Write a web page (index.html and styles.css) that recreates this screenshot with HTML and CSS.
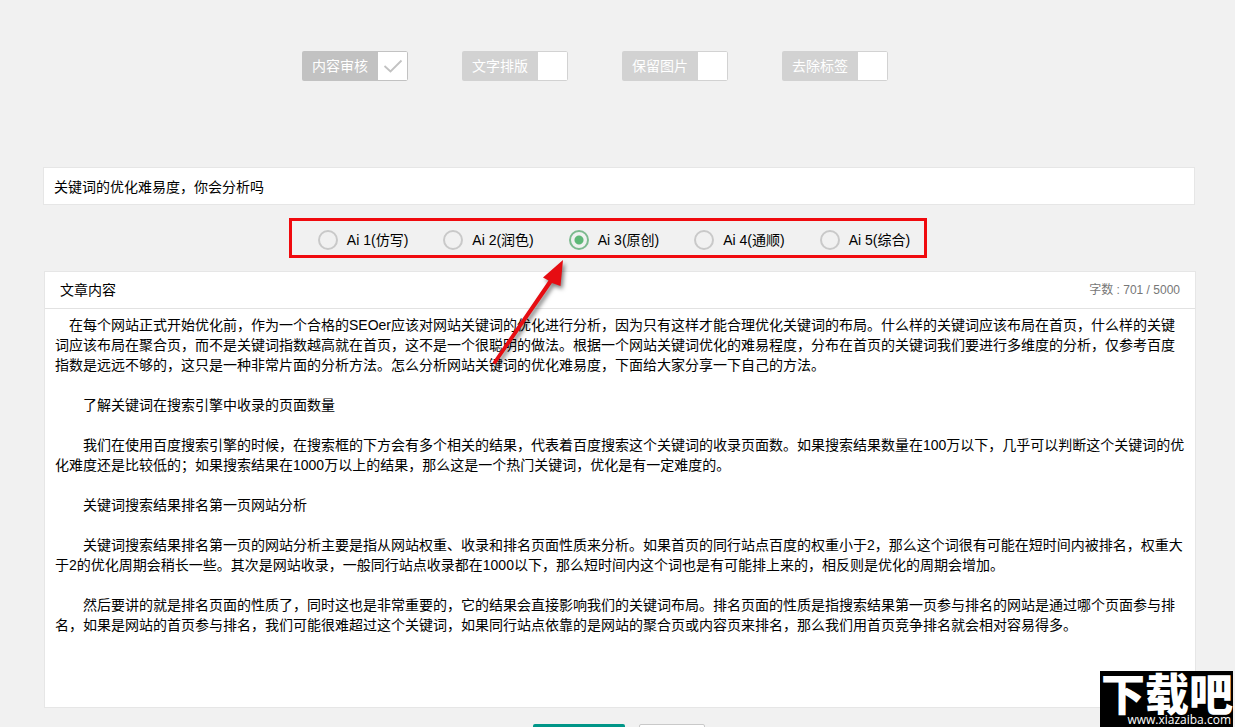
FILE: index.html
```html
<!DOCTYPE html>
<html lang="zh-CN">
<head>
<meta charset="utf-8">
<title>文章内容</title>
<link rel="stylesheet" href="styles.css">
</head>
<body>
<form class="page">
  <div class="options">
    <label class="toggle"><input type="checkbox" checked><span class="toggle-text">内容审核</span><span class="toggle-box"><svg class="tick" viewBox="0 0 20 16"><path d="M1.500 8 7.500 13.500 18.500 2.500" fill="none" stroke="currentColor" stroke-width="1.8"/></svg></span></label>
    <label class="toggle"><input type="checkbox"><span class="toggle-text">文字排版</span><span class="toggle-box"></span></label>
    <label class="toggle"><input type="checkbox"><span class="toggle-text">保留图片</span><span class="toggle-box"></span></label>
    <label class="toggle"><input type="checkbox"><span class="toggle-text">去除标签</span><span class="toggle-box"></span></label>
  </div>

  <input class="title" type="text" aria-label="标题" value="关键词的优化难易度，你会分析吗">

  <div class="modes">
    <label class="mode"><input type="radio" name="mode">Ai 1(仿写)</label>
    <label class="mode"><input type="radio" name="mode">Ai 2(润色)</label>
    <label class="mode"><input type="radio" name="mode" checked>Ai 3(原创)</label>
    <label class="mode"><input type="radio" name="mode">Ai 4(通顺)</label>
    <label class="mode"><input type="radio" name="mode">Ai 5(综合)</label>
    <svg class="arrow" viewBox="0 0 90 120" aria-hidden="true">
      <path d="M7.500 106.500 63.500 24.500 58 21.500 78 4 75.500 30 67 27 10.500 108.500Z" fill="#e60d12"/>
    </svg>
  </div>

  <section class="panel">
    <header class="panel-head">
      <label for="content">文章内容</label>
      <span class="count">字数 : 701 / 5000</span>
    </header>
    <textarea class="content" id="content" spellcheck="false">　在每个网站正式开始优化前，作为一个合格的SEOer应该对网站关键词的优化进行分析，因为只有这样才能合理优化关键词的布局。什么样的关键词应该布局在首页，什么样的关键词应该布局在聚合页，而不是关键词指数越高就在首页，这不是一个很聪明的做法。根据一个网站关键词优化的难易程度，分布在首页的关键词我们要进行多维度的分析，仅参考百度指数是远远不够的，这只是一种非常片面的分析方法。怎么分析网站关键词的优化难易度，下面给大家分享一下自己的方法。

　　了解关键词在搜索引擎中收录的页面数量

　　我们在使用百度搜索引擎的时候，在搜索框的下方会有多个相关的结果，代表着百度搜索这个关键词的收录页面数。如果搜索结果数量在100万以下，几乎可以判断这个关键词的优化难度还是比较低的；如果搜索结果在1000万以上的结果，那么这是一个热门关键词，优化是有一定难度的。

　　关键词搜索结果排名第一页网站分析

　　关键词搜索结果排名第一页的网站分析主要是指从网站权重、收录和排名页面性质来分析。如果首页的同行站点百度的权重小于2，那么这个词很有可能在短时间内被排名，权重大于2的优化周期会稍长一些。其次是网站收录，一般同行站点收录都在1000以下，那么短时间内这个词也是有可能排上来的，相反则是优化的周期会增加。

　　然后要讲的就是排名页面的性质了，同时这也是非常重要的，它的结果会直接影响我们的关键词布局。排名页面的性质是指搜索结果第一页参与排名的网站是通过哪个页面参与排名，如果是网站的首页参与排名，我们可能很难超过这个关键词，如果同行站点依靠的是网站的聚合页或内容页来排名，那么我们用首页竞争排名就会相对容易得多。</textarea>
  </section>

  <div class="actions">
    <button class="btn btn-primary" type="submit" aria-label="提交"></button>
    <button class="btn btn-plain" type="reset" aria-label="重置"></button>
  </div>
</form>

<div class="watermark">
  <span class="mark-name">下载吧</span>
  <span class="mark-url">www.xiazaiba.com</span>
</div>
</body>
</html>
```
FILE: styles.css
```css
* { box-sizing: border-box; }
html { height: 100%; }
body {
  position: relative;
  height: 100%;
  margin: 0;
  overflow: hidden;
  background: #f1f1f1;
  color: #000;
  font: 14px/20px "Liberation Sans", "Noto Sans CJK SC", sans-serif;
  text-spacing-trim: space-all;
}
input, textarea, button { font: inherit; color: inherit; margin: 0; }

.page { padding: 51px 40px 0 43px; }

.options {
  display: flex;
  justify-content: center;
  gap: 54px;
  padding-right: 48px;
}
.toggle {
  position: relative;
  display: flex;
  height: 30px;
  color: #d2d2d2;
  border-radius: 2px;
  overflow: hidden;
}
.toggle input { position: absolute; opacity: 0; }
.toggle-text {
  padding: 5px 10px;
  background: currentColor;
  -webkit-text-fill-color: #fff;
}
.toggle-box {
  display: flex;
  align-items: center;
  justify-content: center;
  width: 30px;
  background: #fff;
  border: 1px solid #d2d2d2;
  border-left: 0;
  border-radius: 0 2px 2px 0;
}
.toggle input:checked ~ span { color: #c2c2c2; border-color: #c2c2c2; }
.tick { width: 20px; height: 16px; }

.title {
  display: block;
  width: 100%;
  height: 38px;
  margin-top: 86px;
  padding: 0 10px;
  background: #fff;
  border: 1px solid #e6e6e6;
}

.modes {
  position: relative;
  display: flex;
  justify-content: center;
  align-items: center;
  gap: 35px;
  width: fit-content;
  height: 40px;
  margin: 13px auto;
  padding: 4px 14px 0 26px;
  border: 3px solid #f00a0e;
  left: -11px;
}
.mode { display: flex; align-items: center; gap: 9px; white-space: nowrap; }
.mode input {
  appearance: none;
  width: 20px;
  height: 20px;
  border: 2px solid #c9c9c9;
  border-radius: 50%;
}
.mode input:checked {
  border-color: #7dba8f;
  background: radial-gradient(circle, #5fb878 4px, transparent 5px);
}
.arrow {
  position: absolute;
  left: 193px;
  top: 35px;
  width: 90px;
  height: 120px;
  z-index: 1;
  pointer-events: none;
  filter: drop-shadow(2px 3px 2px rgba(0, 0, 0, .5));
}

.panel {
  margin: 0 -1px 0 1px;
  background: #fff;
  border: 1px solid #e6e6e6;
}
.panel-head {
  display: flex;
  justify-content: space-between;
  align-items: center;
  height: 37px;
  padding: 0 15px;
  border-bottom: 1px solid #e2e2e2;
}
.count { color: #777; font-size: 12px; }
.content {
  display: block;
  width: 100%;
  height: 398px;
  padding: 6px 8px 6px 10px;
  border: 0;
  outline: 0;
  resize: none;
  overflow: hidden;
  background: transparent;
}

.actions {
  display: flex;
  justify-content: center;
  gap: 14px;
  margin-top: 16px;
}
.btn { height: 38px; border: 0; border-radius: 2px; }
.btn-primary { width: 92px; background: #009688; }
.btn-plain { width: 66px; background: #fff; border: 1px solid #c9c9c9; }

.watermark {
  position: absolute;
  right: 2px;
  bottom: 0;
  display: flex;
  flex-direction: column;
  align-items: flex-end;
  width: 133px;
  height: 56px;
  background: #000;
  color: #fff;
  white-space: nowrap;
  overflow: hidden;
}
.mark-name { font: 900 44px/42px "Noto Sans CJK SC", sans-serif; }
.mark-url { padding-right: 2px; font: 12px/14px "Open Sans", sans-serif; }
```
